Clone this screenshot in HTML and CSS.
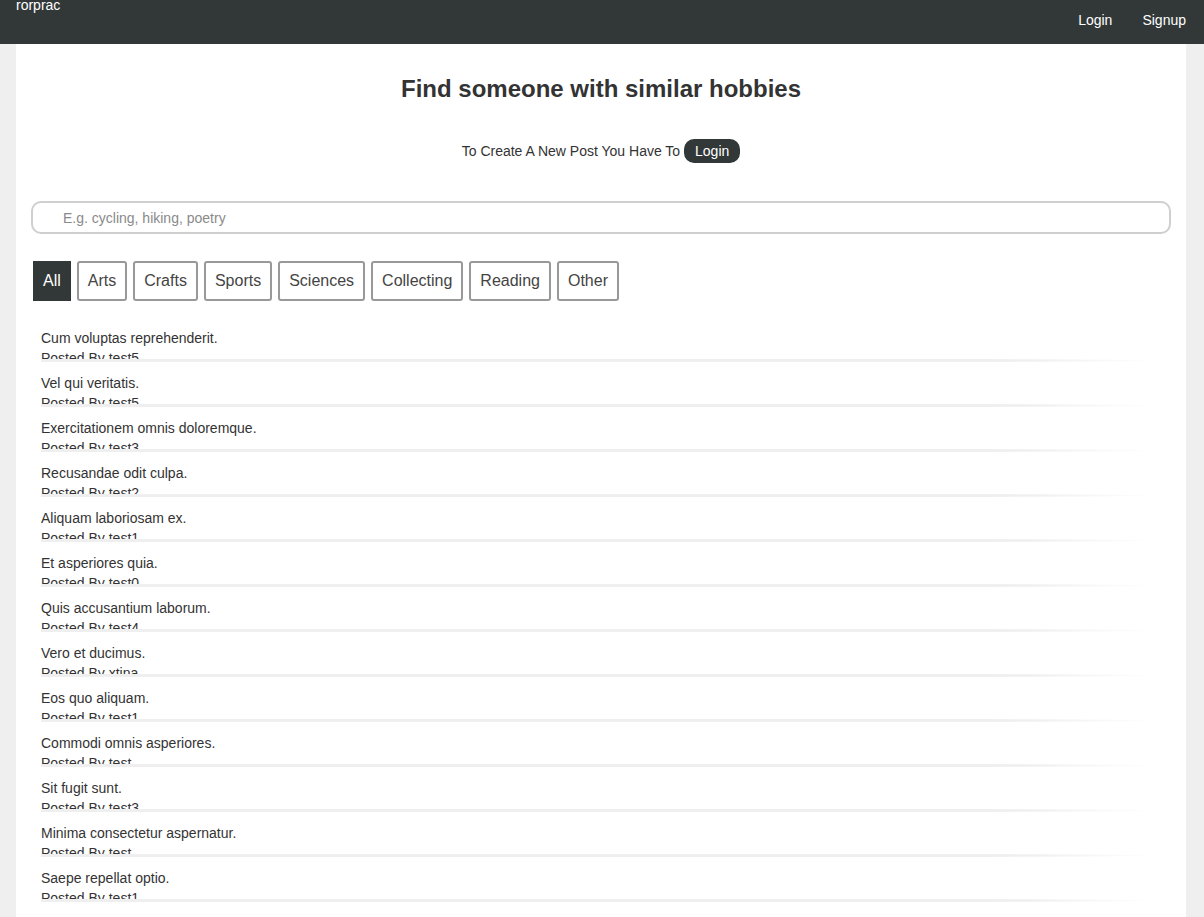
FILE: index.html
```html
<!DOCTYPE html>
<html lang="en">
<head>
<meta charset="utf-8">
<title>rorprac</title>
<link rel="stylesheet" href="styles.css">
</head>
<body>
<nav class="navbar">
  <a class="brand" href="#">rorprac</a>
  <div class="nav-links">
    <a href="#">Login</a>
    <a href="#">Signup</a>
  </div>
</nav>
<main class="container">
  <h1 class="title">Find someone with similar hobbies</h1>
  <p class="cta">To Create A New Post You Have To <a class="pill" href="#">Login</a></p>
  <div class="search">
    <input type="text" placeholder="E.g. cycling, hiking, poetry">
  </div>
  <div class="tabs">
    <button class="tab active">All</button>
    <button class="tab">Arts</button>
    <button class="tab">Crafts</button>
    <button class="tab">Sports</button>
    <button class="tab">Sciences</button>
    <button class="tab">Collecting</button>
    <button class="tab">Reading</button>
    <button class="tab">Other</button>
  </div>
  <ul class="posts">
    <li class="post"><div class="post-body"><div class="post-title">Cum voluptas reprehenderit.</div><div class="post-author">Posted By test5</div></div><div class="sep"></div></li>
    <li class="post"><div class="post-body"><div class="post-title">Vel qui veritatis.</div><div class="post-author">Posted By test5</div></div><div class="sep"></div></li>
    <li class="post"><div class="post-body"><div class="post-title">Exercitationem omnis doloremque.</div><div class="post-author">Posted By test3</div></div><div class="sep"></div></li>
    <li class="post"><div class="post-body"><div class="post-title">Recusandae odit culpa.</div><div class="post-author">Posted By test2</div></div><div class="sep"></div></li>
    <li class="post"><div class="post-body"><div class="post-title">Aliquam laboriosam ex.</div><div class="post-author">Posted By test1</div></div><div class="sep"></div></li>
    <li class="post"><div class="post-body"><div class="post-title">Et asperiores quia.</div><div class="post-author">Posted By test0</div></div><div class="sep"></div></li>
    <li class="post"><div class="post-body"><div class="post-title">Quis accusantium laborum.</div><div class="post-author">Posted By test4</div></div><div class="sep"></div></li>
    <li class="post"><div class="post-body"><div class="post-title">Vero et ducimus.</div><div class="post-author">Posted By xtina</div></div><div class="sep"></div></li>
    <li class="post"><div class="post-body"><div class="post-title">Eos quo aliquam.</div><div class="post-author">Posted By test1</div></div><div class="sep"></div></li>
    <li class="post"><div class="post-body"><div class="post-title">Commodi omnis asperiores.</div><div class="post-author">Posted By test</div></div><div class="sep"></div></li>
    <li class="post"><div class="post-body"><div class="post-title">Sit fugit sunt.</div><div class="post-author">Posted By test3</div></div><div class="sep"></div></li>
    <li class="post"><div class="post-body"><div class="post-title">Minima consectetur aspernatur.</div><div class="post-author">Posted By test</div></div><div class="sep"></div></li>
    <li class="post"><div class="post-body"><div class="post-title">Saepe repellat optio.</div><div class="post-author">Posted By test1</div></div><div class="sep"></div></li>
    <li class="post faded"><div class="post-body"><div class="post-title">Sit illo quia molestiae.</div><div class="post-author">Posted By test2</div></div><div class="sep"></div></li>
  </ul>
</main>
</body>
</html>
```

FILE: styles.css
```css
* { box-sizing: border-box; }
html, body { margin: 0; padding: 0; }
body {
  background: #efefef;
  font-family: "Liberation Sans", Arial, Helvetica, sans-serif;
  font-size: 14px;
  color: #333;
}
a { text-decoration: none; }

.navbar {
  height: 44px;
  background: #323838;
  display: flex;
  justify-content: space-between;
  align-items: flex-start;
  padding: 0 18px 0 16px;
}
.brand {
  color: #fff;
  font-size: 14px;
  line-height: 14px;
  margin-top: -2px;
}
.nav-links {
  display: flex;
  gap: 30px;
  height: 44px;
  align-items: center;
  padding-bottom: 4px;
}
.nav-links a { color: #fff; font-size: 14px; }

.container {
  width: 1170px;
  margin: 0 16px;
  background: #fff;
  padding: 0 15px;
  min-height: 873px;
}
.title {
  margin: 0;
  padding-top: 31px;
  text-align: center;
  font-size: 24px;
  font-weight: bold;
  line-height: 28px;
  color: #333;
}
.cta {
  margin: 36px 0 0;
  text-align: center;
  font-size: 14px;
  line-height: 24px;
  color: #333;
}
.pill {
  display: inline-block;
  background: #323838;
  color: #fff;
  border-radius: 10px;
  padding: 0 11px;
  line-height: 24px;
  height: 24px;
  vertical-align: top;
}
.search { margin-top: 38px; }
.search input {
  width: 100%;
  height: 33px;
  border: 2px solid #cfcfcf;
  border-radius: 10px;
  padding: 0 0 0 30px;
  font-family: inherit;
  font-size: 14px;
  color: #333;
  outline: none;
}
.search input::placeholder { color: #8a8a8a; }

.tabs {
  display: flex;
  gap: 6px;
  margin-top: 27px;
  padding-left: 2px;
}
.tab {
  height: 40px;
  border: 2px solid #999;
  border-radius: 3px;
  background: #fff;
  color: #444;
  font-family: inherit;
  font-size: 16px;
  padding: 0 9px;
  cursor: pointer;
}
.tab.active {
  background: #323838;
  border-color: #323838;
  color: #fff;
  border-radius: 0;
  padding: 0 8px;
}

.posts {
  list-style: none;
  margin: 27px 0 0;
  padding: 0 10px;
}
.post { margin-bottom: 11px; }
.post-body {
  height: 31px;
  overflow: hidden;
  line-height: 20px;
  font-size: 14px;
  color: #333;
}
.sep {
  height: 3px;
  border-radius: 0 50% 50% 0 / 0 100% 100% 0;
  background: linear-gradient(to right, #efefef 0%, #efefef 88%, rgba(239,239,239,0) 100%);
}
.post.faded .post-body { color: #c8c8c8; }
```
